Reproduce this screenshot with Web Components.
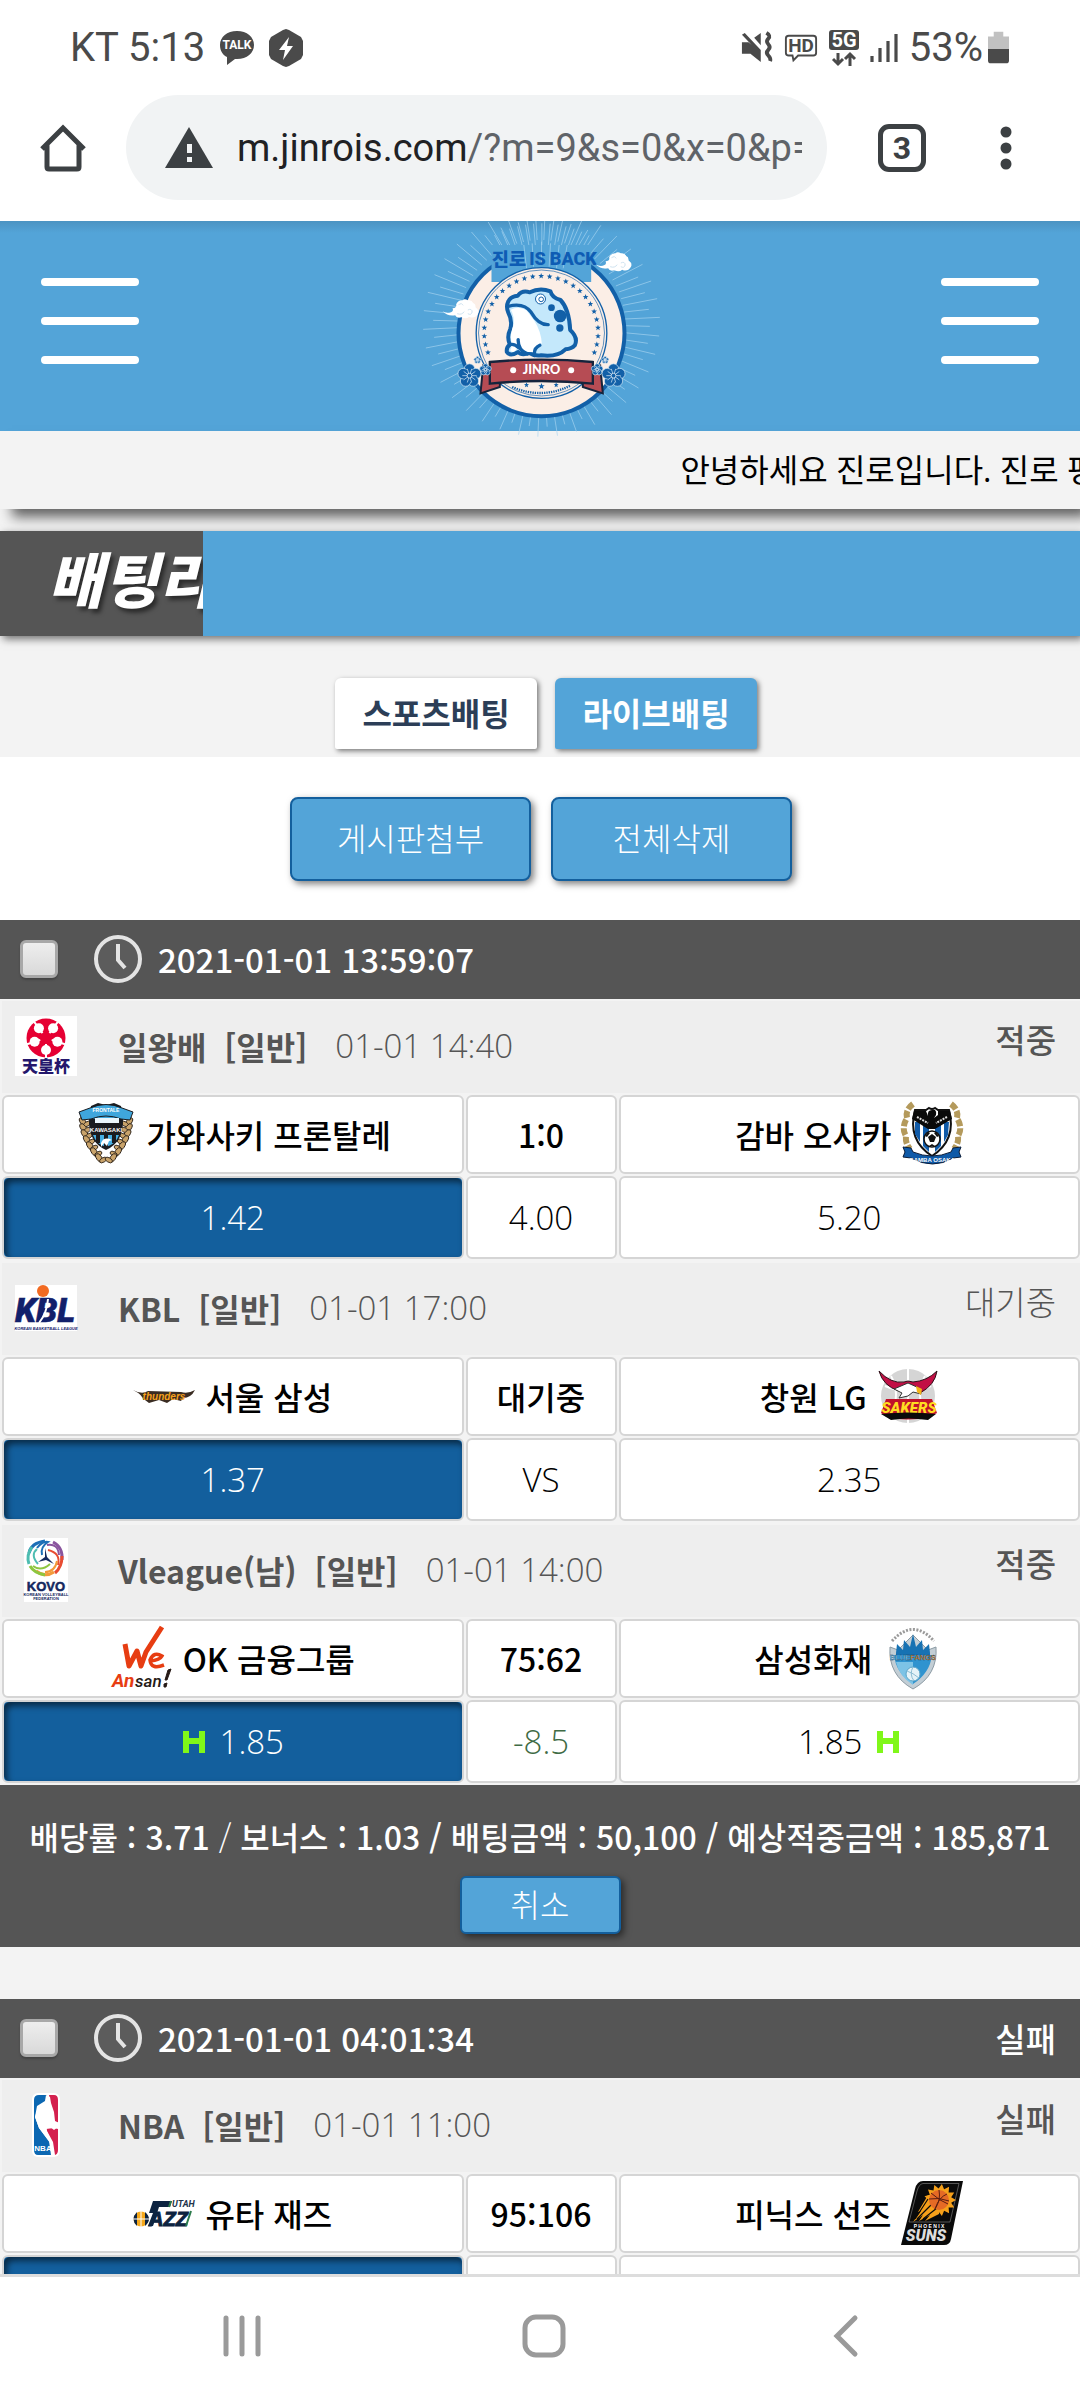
<!DOCTYPE html>
<html lang="ko">
<head>
<meta charset="utf-8">
<meta name="viewport" content="width=device-width, initial-scale=1">
<title>진로</title>
<style>
html,body{margin:0;height:100%}
body{font-family:"Open Sans","Noto Sans CJK KR",sans-serif;font-size:33px;line-height:44px;color:#000;background:#fff;
--sky:#53a4d8;--deep:#135f9d;--dark:#555;--paper:#f3f3f3;--cell:#d5d5d5;--kr:"Noto Sans CJK KR",sans-serif}
</style>
</head>
<body>
<phone-shell>
<status-bar slot="top"></status-bar>
<address-bar slot="top"></address-bar>
<site-header></site-header>
<news-ticker>안녕하세요 진로입니다. 진로 평</news-ticker>
<page-title>배팅리</page-title>
<bet-tabs></bet-tabs>
<bulk-actions></bulk-actions>
<bet-slip date="2021-01-01 13:59:07">
<bet-match logo="emperor" league="일왕배" time="01-01 14:40" result="적중" home="가와사키 프론탈레" home-logo="kawasaki" score="1:0" away="감바 오사카" away-logo="gamba" home-odds="1.42" mid-odds="4.00" away-odds="5.20"></bet-match>
<bet-match logo="kbl" league="KBL" time="01-01 17:00" result="대기중" pending home="서울 삼성" home-logo="thunders" score="대기중" away="창원 LG" away-logo="sakers" home-odds="1.37" mid-odds="VS" away-odds="2.35"></bet-match>
<bet-match logo="kovo" league="Vleague(남)" time="01-01 14:00" result="적중" home="OK 금융그룹" home-logo="ansan" score="75:62" away="삼성화재" away-logo="fangs" home-odds="1.85" mid-odds="-8.5" away-odds="1.85" handicap></bet-match>
<slip-total slot="footer"></slip-total>
</bet-slip>
<bet-slip date="2021-01-01 04:01:34" result="실패">
<bet-match logo="nba" league="NBA" time="01-01 11:00" result="실패" home="유타 재즈" home-logo="jazz" score="95:106" away="피닉스 선즈" away-logo="suns" home-odds="1.45" mid-odds="VS" away-odds="2.30"></bet-match>
</bet-slip>
<system-nav slot="bottom"></system-nav>
</phone-shell>
<script>
const star=(x,y,r,f)=>{let p='';for(let i=0;i<10;i++){const a=Math.PI*(i/5-.5),q=i%2?r*.42:r;p+=(x+q*Math.cos(a)).toFixed(1)+','+(y+q*Math.sin(a)).toFixed(1)+' '}return `<polygon points="${p}" fill="${f}"/>`};
const burst=(x,y,n,a,b,f)=>{let p='';for(let i=0;i<n*2;i++){const t=Math.PI*i/n,q=i%2?b:a;p+=(x+q*Math.cos(t)).toFixed(1)+','+(y+q*Math.sin(t)).toFixed(1)+' '}return `<polygon points="${p}" fill="${f}"/>`};
const ringStars=()=>{let s='';for(let i=0;i<27;i++){const a=(-201+i*222/26)*Math.PI/180;s+=star(482+171*Math.cos(a),352+169*Math.sin(a),9,'#1260a8')}return s};
const panels=(x,y)=>{let s='';for(let i=0;i<5;i++){const a=(i*72-54)*Math.PI/180,b=(i*72-90)*Math.PI/180;s+=`<circle cx="${(x+12*Math.cos(a)).toFixed(1)}" cy="${(y+12*Math.sin(a)).toFixed(1)}" r="5" fill="#fff"/><path d="M${(x+6*Math.cos(a)).toFixed(1)} ${(y+6*Math.sin(a)).toFixed(1)}L${(x+20*Math.cos(a)).toFixed(1)} ${(y+20*Math.sin(a)).toFixed(1)}" stroke="#fff" stroke-width="2"/><path d="M${(x+6*Math.cos(b)).toFixed(1)} ${(y+6*Math.sin(b)).toFixed(1)}L${(x+14*Math.cos(b)).toFixed(1)} ${(y+14*Math.sin(b)).toFixed(1)}" stroke="#e60033" stroke-width="2.500"/>`}return s};
const rays=()=>{let s='';for(let i=0;i<76;i++){const a=i*Math.PI/38+.03,r=i%2?340:310,c=Math.cos(a),n=Math.sin(a);s+=`M${(483+250*c).toFixed(0)} ${(325+250*n).toFixed(0)}L${(483+(r+15)*c).toFixed(0)} ${(325+r*n).toFixed(0)}`}
for(let i=0;i<13;i++){const a=(-118+i*4.7)*Math.PI/180;s+=`M${(483+170*Math.cos(a)).toFixed(0)} ${(325+170*Math.sin(a)).toFixed(0)}L${(483+300*Math.cos(a)).toFixed(0)} ${(325+300*Math.sin(a)).toFixed(0)}`}return s};
const flower=(x,y,r)=>{let s='';for(let i=0;i<5;i++){const a=(i*72-90)*Math.PI/180;s+=`<circle cx="${(x+r*.55*Math.cos(a)).toFixed(1)}" cy="${(y+r*.55*Math.sin(a)).toFixed(1)}" r="${r*.44}" fill="#1260a8" stroke="#d9edf8" stroke-width="2"/>`}s+=`<circle cx="${x}" cy="${y}" r="${r*.55}" fill="#1260a8"/>`;for(let i=0;i<10;i++){const a=i*36*Math.PI/180;s+=`<path d="M${x} ${y}L${(x+r*.6*Math.cos(a)).toFixed(1)} ${(y+r*.6*Math.sin(a)).toFixed(1)}" stroke="#e6f3fa" stroke-width="2"/>`}return s+`<circle cx="${x}" cy="${y}" r="${r*.2}" fill="#1260a8" stroke="#fff" stroke-width="2"/>`};
const cloud='<path fill="#fff" d="M0 36Q15 45 27 38Q34 34 30 27Q44 26 41 15Q47 2 60 3Q66-4 76 3Q88 1 92 11Q100 14 99 24Q112 34 106 44Q96 60 80 52Q71 61 57 54Q42 58 38 48Q16 52 0 36Z"/><path d="M48 16Q58 8 62 18M76 32Q88 26 89 38Q86 49 76 43M44 43Q58 48 65 37" fill="none" stroke="#cfe3f0" stroke-width="3"/>';
const laurel=(x,d,col)=>{let s='';for(let i=0;i<7;i++){const y=20+i*6,o=i*i*.45;s+=`<ellipse cx="${x+d*o}" cy="${y}" rx="5" ry="2.6" fill="${col}" stroke="#2b221a" stroke-width=".9" transform="rotate(${d*55} ${x+d*o} ${y})"/><ellipse cx="${x+d*(o+4)}" cy="${y+2}" rx="4" ry="2.2" fill="${col}" stroke="#2b221a" stroke-width=".8" transform="rotate(${-d*30} ${x+d*(o+4)} ${y+2})"/>`}return s};
const T='font-family="Liberation Sans,Noto Sans CJK KR,sans-serif"';
const R='font-family="Roboto,sans-serif"';
const ART={
talk:['0 0 36 36',`<path fill="#4a4a4a" d="M18 1C8 1 1 7 1 15c0 6 3 10 7 12v8l8-6h2c10 0 17-6 17-14S28 1 18 1Z"/><text x="18" y="19" ${R} font-size="12" font-weight="700" fill="#fff" text-anchor="middle">TALK</text>`],
hex:['0 0 34 38','<path fill="#4a4a4a" d="M17 0l3 1 12 7 2 4v14l-2 4-12 7-3 1-3-1-12-7-2-4V12l2-4 12-7Z"/><path fill="#fff" d="M20 8L10 21h6l-2 10 10-14h-6Z"/>'],
mute:['0 0 34 34','<path fill="#4a4a4a" d="M1 11h7l13 11v10L10 23H1ZM1 3l3-2 17 18v5ZM14 6l7-5v13Z"/><path d="M27 1q5 3 2 6t0 6 0 6 0 6 2 6" fill="none" stroke="#4a4a4a" stroke-width="4"/>'],
hd:['0 0 36 30',`<path d="M5 2h26q3 0 3 3v15q0 3-3 3H15l-5 5-1-5H5q-3 0-3-3V5q0-3 3-3Z" fill="none" stroke="#4a4a4a" stroke-width="2"/><text x="18" y="19.500" ${R} font-size="20" font-weight="700" fill="#4a4a4a" text-anchor="middle">HD</text>`],
fiveg:['0 0 30 38',`<rect x="0" y="1" width="30" height="20" rx="3" fill="#4a4a4a"/><text x="15" y="18" ${R} font-size="20" font-weight="700" fill="#fff" text-anchor="middle">5G</text><path d="M9 24v11M4 30l5 5 5-5M21 37V26M16 30l5-5 5 5" fill="none" stroke="#4a4a4a" stroke-width="3"/>`],
signal:['0 0 28 30','<path d="M2 29v-6M10 29V15M18 29V8M26 29V1" stroke="#4a4a4a" stroke-width="3.200"/>'],
battery:['0 0 22 34','<path fill="#c1c1c1" d="M6 0h10v5h6v13H0V5h6Z"/><path fill="#4a4a4a" d="M0 18h22v12q0 3-3 3H3q-3 0-3-3Z"/>'],
home:['0 0 48 48','<path d="M3 25L24 4l21 21M8 21v22q0 2 2 2h28q2 0 2-2V21" fill="none" stroke="#3c4043" stroke-width="5"/>'],
warn:['0 0 48 41','<path fill="#3c4043" d="M24 0l24 41H0Z"/><path fill="#f1f3f4" d="M22 17h5v9h-5ZM22 30h5v5h-5Z"/>'],
more:['0 0 12 44','<g fill="#3c4043"><circle cx="6" cy="6" r="5.500"/><circle cx="6" cy="22" r="5.500"/><circle cx="6" cy="38" r="5.500"/></g>'],
menu:['0 0 98 88','<path d="M4 5h90M4 44h90M4 83h90" stroke="#fff" stroke-width="8" stroke-linecap="round"/>'],
clock:['0 0 50 50','<circle cx="25" cy="25" r="22" fill="#5c5c5c" stroke="#e4e4e4" stroke-width="4"/><path d="M25 10v16l7 8" fill="none" stroke="#e4e4e4" stroke-width="4"/>'],
recents:['0 0 40 44','<path d="M4 4v36M20 4v36M36 4v36" stroke="#9a9a9a" stroke-width="5" stroke-linecap="round"/>'],
square:['0 0 44 44','<rect x="3" y="3" width="38" height="38" rx="11" fill="none" stroke="#9a9a9a" stroke-width="5"/>'],
back:['0 0 26 44','<path d="M22 4L4 22l18 18" fill="none" stroke="#9a9a9a" stroke-width="5" stroke-linecap="round"/>'],
h:['0 0 24 24','<path fill="#80f719" d="M1 1h6v7h10V1h6v22h-6v-9H7v9H1Z"/>'],
brand:['125 18 710 630',`<path d="${rays()}" stroke="#a9d6f2" stroke-width="3" opacity=".65"/>
<circle cx="483" cy="355" r="249" fill="#fbeee6" stroke="#1260a8" stroke-width="12"/>
<path fill="#53a4d8" d="M333 90h299v111H333Z"/><path d="M430 90l8 70M455 85l4 70M483 80v70M510 85l-4 70M536 90l-8 70M560 90l-12 70" stroke="#a9d6f2" stroke-width="2"/>
<circle cx="483" cy="354" r="196" fill="#fbeee6" stroke="#1260a8" stroke-width="4"/><circle cx="483" cy="354" r="189" fill="none" stroke="#1260a8" stroke-width="2"/>
${ringStars()}
<g font-weight="900" fill="#0e5cb4"><text x="334" y="154" font-family="Noto Sans CJK KR" font-size="56">진로</text><text x="446" y="151" ${R} font-size="54">IS</text><text x="508" y="151" ${R} font-size="54">BACK</text></g>
<path d="M383 260Q388 245 412 242Q425 224 448 232Q478 216 510 229Q514 248 540 255Q566 282 569 345Q594 368 583 391Q574 402 555 403Q531 427 482 421Q462 424 447 414Q423 423 413 411Q388 426 379 411Q377 397 388 389Q378 366 389 343Q397 318 383 292Q376 275 383 260Z" fill="#c4e8fb" stroke="#1260a8" stroke-width="12" stroke-linejoin="round"/>
<path d="M391 284Q414 272 438 286L462 318Q482 350 484 386Q468 384 463 412Q420 412 414 394Q399 420 389 406Q398 391 392 378Q388 358 399 330Q403 305 391 284Z" fill="#fff"/>
<path d="M383 274Q430 262 452 292Q474 330 503 329M413 374Q412 406 441 417M478 391Q459 399 462 422M388 389Q402 385 414 398" fill="none" stroke="#1260a8" stroke-width="10" stroke-linecap="round"/>
<circle cx="480" cy="252" r="15" fill="#fff" stroke="#1260a8" stroke-width="3"/><circle cx="482" cy="253" r="7" fill="none" stroke="#1260a8" stroke-width="3"/>
<circle cx="539" cy="303" r="19" fill="#1260a8"/><circle cx="513" cy="278" r="10" fill="#1260a8"/><circle cx="538" cy="339" r="11" fill="#1260a8"/>
<path d="M300 535L308 452L358 468V516ZM667 535L659 452L607 468V516Z" fill="#b64c54" stroke="#16243c" stroke-width="6"/>
<path d="M328 441Q483 427 637 441V506Q483 490 328 506Z" fill="#b64c54" stroke="#16243c" stroke-width="7"/>
<circle cx="398" cy="466" r="9" fill="#fff"/><circle cx="572" cy="466" r="9" fill="#fff"/><text x="483" y="478" font-family="Lato" font-size="38" font-weight="900" fill="#fff" text-anchor="middle">JINRO</text>
${star(438,510,8,'#1260a8')}${star(483,514,10,'#1260a8')}${star(527,510,8,'#1260a8')}
<path d="M395 516Q483 554 570 512" fill="none" stroke="#1260a8" stroke-width="7" stroke-dasharray="4 3"/>
${flower(267,482,36)}${flower(315,464,18)}${flower(291,435,11)}${flower(699,482,36)}${flower(650,464,18)}${flower(674,435,11)}
<g transform="translate(186 253)">${cloud}</g><g transform="translate(645 112)">${cloud}</g>`],
emperor:['0 0 62 60',`<path fill="#fff" d="M0 0h62v60H0Z"/><circle cx="31" cy="22" r="19.500" fill="#e60033"/>${panels(31,22)}<text x="31" y="56" font-family="Noto Sans CJK JP" font-size="16" font-weight="900" fill="#24176c" text-anchor="middle">天皇杯</text>`],
kbl:['0 0 62 46',`<path fill="#fff" d="M0 0h62v46H0Z"/><text x="30" y="37" ${R} font-size="34" font-weight="900" font-style="italic" fill="#12206b" text-anchor="middle" stroke="#12206b" stroke-width=".500">KBL</text><path d="M24 38q8-10 9-24" stroke="#fff" stroke-width="2" fill="none"/><circle cx="28" cy="6" r="6" fill="#f26a21"/><text x="31" y="45" ${T} font-size="4" font-weight="700" font-style="italic" fill="#12206b" text-anchor="middle">KOREAN BASKETBALL LEAGUE</text>`],
kovo:['0 0 44 64',`<path fill="#fff" d="M0 0h44v64H0Z"/><g fill="none" stroke-width="3"><path d="M21 3Q7 5 5 15" stroke="#1d6fb7"/><path d="M29 4Q39 9 38 22" stroke="#8a559e"/><path d="M38 18Q38 29 31 35" stroke="#e84c32"/><path d="M30 34Q21 40 12 33" stroke="#f29a3a"/><path d="M21 37Q10 35 6 28" stroke="#8dc63f"/><path d="M5 26Q2 17 8 9" stroke="#4dbdb1"/></g><g fill="none" stroke-width="2"><path d="M13 10Q18 3 24 4Q16 9 18 17" stroke="#1d6fb7"/><path d="M23 7Q34 5 35 17" stroke="#8a559e"/><path d="M24 12Q37 15 34 27" stroke="#e84c32"/><path d="M33 23Q31 34 21 34" stroke="#f29a3a"/><path d="M26 26Q17 34 9 28" stroke="#8dc63f"/><path d="M14 26Q6 17 13 11" stroke="#4dbdb1"/></g><path d="M21 10v9l-7 5 8-2 8 4-7-7Z" fill="#14285f"/><text x="22" y="53" ${T} font-size="13" font-weight="700" fill="#14285f" stroke="#14285f" stroke-width=".500" text-anchor="middle">KOVO</text><text x="22" y="58" ${T} font-size="4" font-weight="700" fill="#14285f" text-anchor="middle">KOREAN VOLLEYBALL</text><text x="22" y="62" ${T} font-size="4" font-weight="700" fill="#14285f" text-anchor="middle">FEDERATION</text>`],
nba:['0 0 28 64',`<rect width="28" height="64" rx="6" fill="#fff"/><path fill="#0b67b2" d="M7 2h8l-2 8-7 4-3 10 4 11 10 13 2 14H6q-4 0-4-5V7q0-5 5-5Z"/><path fill="#d4214f" d="M17 2h5q4 0 4 5v22l-3 1-3-12-2-9ZM26 36v21q0 5-4 5l-3-14-5-12 8-1Z"/><path fill="#fff" d="M14 2l4 2 1 6 3 9 1 9q4 1 3 6l-4 3-4-3 1-4-3-7-2 6 1 9 6 11 2 13h-2l-3-12-11-15-4-11 2-11 8-5Z"/><text x="11" y="58" ${T} font-size="8" font-weight="700" fill="#fff" text-anchor="middle">NBA</text>`],
kawasaki:['0 0 56 64',`${laurel(5,1,'#c9a36a')}${laurel(51,-1,'#c9a36a')}<path d="M13 4l7-3 8 2 8-2 7 3 2 12q1 24-17 32Q10 40 11 16Z" fill="#1a1c20"/><path d="M15 7l13-2 13 2 2 10H13Z" fill="#3fa6dc"/><path d="M15 33q3 9 13 12 10-3 13-12Z" fill="#46aee2"/><path d="M20 33v8M28 33v12M36 33v8" stroke="#1a1c20" stroke-width="4"/><path d="M1 10l11-4q16-7 32 0l11 4-3 8-9-1q-15-6-30 0l-9 1Z" fill="#3fa6dc" stroke="#1a1c20"/><path d="M17 16h24v5H17Z" fill="#eaf6fc"/><text x="28" y="10" ${T} font-size="5" font-weight="700" fill="#fff" text-anchor="middle">FRONTALE</text><text x="28" y="30" ${T} font-size="6" font-weight="700" fill="#fff" text-anchor="middle">KAWASAKI</text><path d="M23 41q3-7 11-3l-3 1-2 5-3-3-3 4Z" fill="#fff"/>`],
gamba:['0 0 60 62',`<path d="M11 1q-8 6-6 14-6 10-1 18-1 7 4 13M49 1q8 6 6 14 6 10 1 18 1 7-4 13" fill="none" stroke="#b49a5c" stroke-width="6" stroke-dasharray="7 2"/><path d="M13 7h11l3-2q3 2 6 0l3 2h11q8 30-17 46Q5 37 13 7Z" fill="#fff" stroke="#111" stroke-width="2"/><path d="M13 19h5v20l-5-8ZM21 19h6v30l-6-6ZM33 19h6v24l-6 6ZM42 19h5l-1 13-4 7Z" fill="#0f5aa8"/><path d="M12 8h12l2 5q-1-6 4-6 5-1 4 5l-2 3 4-3V8h12l2 8-17 10H26L10 16Z" fill="#0a0a0a"/><path d="M15 14l11 6M45 14l-11 6" stroke="#ddd" stroke-width="2" stroke-dasharray="2 1"/><circle cx="30" cy="36" r="8" fill="#fff" stroke="#111" stroke-width="1.500"/><path d="M30 31l4 3-2 5h-4l-2-5ZM23 33l3-4 2 1-3 4ZM37 33l-3-4-2 1 3 4ZM27 43l3-2 3 2Z" fill="#111"/><path d="M1 44l8 1 2 4q19 8 38 0l2-4 8-1-2 5 2 5-8 1q-20 12-42 0l-8-1 2-5Z" fill="#0f5aa8" stroke="#0a1c38"/><text x="30" y="58.500" ${T} font-size="6" font-weight="700" fill="#fff" text-anchor="middle">GAMBA OSAKA</text>`],
thunders:['0 0 62 14',`<path d="M0 1q9 5 15 1l33 1q7 2 14-2-4 8-12 8l-2 3-8-2-6 4-8-3-10 3-4-3H10q0-5-10-10Z" fill="#3a2c22"/><text x="31" y="11" ${T} font-size="10" font-weight="700" font-style="italic" fill="#f5a01c" text-anchor="middle">thunders</text>`],
sakers:['0 0 60 56',`<circle cx="30" cy="28" r="27" fill="#d5d5d5"/><path d="M30 1v54M7 18q23 10 46 0M13 8q10 18 0 38M47 8q-10 18 0 38" fill="none" stroke="#fff" stroke-width="2"/><path d="M1 3q12 13 25 11l4-1 5 1Q49 13 59 3q-2 14-17 22l-7-2H21Q5 18 1 3Z" fill="#c20f45" stroke="#2b1219"/><path d="M16 21l14-6 11 5 2 6-8-2-5 4-9 2 3-5Z" fill="#fff" stroke="#333"/><path d="M38 18l6 3-1 6-4-3Z" fill="#f4b517"/><path d="M3 45L8 31h46l5 14-8 4q-22 5-42 0Z" fill="#c0122b"/><text x="31" y="45" ${R} font-size="15" font-weight="900" font-style="italic" fill="#ffdd21" text-anchor="middle">SAKERS</text><path d="M3 46q27-3 55 0l-8 6q-20-3-37 0Z" fill="#0a0a0a"/>`],
ansan:['0 0 62 62',`<path d="M14 17l4 22 8-15 4 15 5-14 16-25" fill="none" stroke="#e73d12" stroke-width="5" stroke-linejoin="round"/><path d="M39 34q10-1 12-5-8-5-12 4 1 10 14 5" fill="none" stroke="#e73d12" stroke-width="3.500"/><text x="1" y="60" ${R} font-size="19" font-weight="700" font-style="italic" fill="#e73d12">An</text><text x="24" y="60" ${R} font-size="17" font-style="italic" font-weight="500" fill="#261a16">san</text><path d="M57 43l3-1-4 11h-2ZM53 57l3-1-1 4h-2Z" fill="#261a16" stroke="#261a16"/>`],
fangs:['0 0 48 64',`<path d="M3 15Q24-8 45 15" fill="none" stroke="#9a9a9a" stroke-width="3" stroke-dasharray="2 1.500"/><path d="M1 21l8 3 15-15 15 15 8-3q2 28-23 42Q-1 49 1 21Z" fill="#c3ced5" stroke="#8b9aa3"/><path d="M7 27l1-9 6 6 1-10 6 7 3-13 3 13 6-7 1 10 6-6 1 9v4H7Z" fill="#1772b3"/><path d="M5 29h38q-2 18-19 29Q7 47 5 29Z" fill="#2f93cf"/><path d="M24 36v23Q10 50 7 36Z" fill="#7cc3e6"/><circle cx="24" cy="48" r="7" fill="#e5f3f8" stroke="#5ca5c9"/><path d="M18 45q6 2 12 7M24 41q-4 7 1 14" stroke="#8dbdd3" fill="none"/><text x="24" y="34" ${T} font-size="7.500" font-weight="700" fill="#f09226" stroke="#173e62" stroke-width=".300" text-anchor="middle"><tspan fill="#8bd0f5">BLUE</tspan>FANGS</text>`],
jazz:['0 0 62 28',`<circle cx="8" cy="20" r="7.500" fill="#f5a81c"/><path d="M4 13v14Q-3 20 4 13ZM12 13v14q8-7 0-14Z" fill="#0c2340"/><path d="M0 20h16M8 12v16" stroke="#fff"/><path d="M20 2h19l-2 6H26l-6 19h-5l5-13h-4Z" fill="#0c2340"/><text x="16" y="27" ${T} font-size="20" font-weight="700" font-style="italic" fill="#0c2340" stroke="#0c2340">AZZ</text><text x="39" y="8" ${R} font-size="9" font-weight="700" font-style="italic" fill="#22334a">UTAH</text><path d="M53 27l5-15M38 2l-2 6" stroke="#2b7b4b" stroke-width="2"/>`],
suns:['0 0 62 64',`<path d="M22 0h40L50 58q-1 6-7 6H0L14 8q2-8 8-8Z" fill="#0a0a0a"/><path d="M22 2.500h36L49 41H8l8-31q2-7 6-7.500Z" fill="none" stroke="#777" stroke-width=".700"/>${burst(39,19,13,16,11.5,'#f6a01a')}<path d="M27 14L17 31l3-1-8 11 10-7-4 6 11-6-5 6 14-7 1-9Z" fill="#f6a01a"/><path d="M27 18L14 38M32 22L16 38M36 27L22 38" stroke="#0a0a0a" stroke-width="1.200"/><circle cx="38" cy="19" r="10" fill="#e56a25"/><path d="M28 18q10-2 20 2M38 9q2 10-4 19M30 12q9 8 17 11M46 13q-8 3-12 15" stroke="#5a1c10" fill="none"/><text x="28" y="47" ${T} font-size="5" font-weight="700" fill="#fff" text-anchor="middle">P H O E N I X</text><text x="25" y="60" ${R} font-size="16" font-weight="900" font-style="italic" fill="#ddd" text-anchor="middle">SUNS</text>`]
};
const define=(tag,html)=>customElements.define(tag,class extends HTMLElement{
  connectedCallback(){if(this.shadowRoot)return;this.attachShadow({mode:'open'}).innerHTML='<style>:host{display:block;box-sizing:border-box}*,*::before{box-sizing:border-box}button{font:inherit;color:inherit;border:0;background:none;padding:0;margin:0}</style>'+(typeof html==='function'?html(this):html)}
});
define('art-work',el=>{const [box,body]=ART[el.getAttribute('name')];return `<style>:host{display:block;flex:none}svg{display:block;width:100%;height:100%;overflow:visible}</style><svg viewBox="${box}" aria-hidden="true">${body}</svg>`});
const art=(name,w,h)=>`<art-work name="${name}" style="width:${w}px;height:${h}px"></art-work>`;
define('phone-shell',`<style>:host{display:flex;flex-direction:column;height:100vh}
main{flex:1;min-height:0;overflow:hidden;background:var(--paper)}</style><slot name="top"></slot><main><slot></slot></main><slot name="bottom"></slot>`);
define('status-bar',`<style>:host{display:flex;justify-content:space-between;align-items:center;height:95px;padding:0 71px 0 70px;font-family:Roboto,sans-serif;font-size:40px;line-height:48px;color:#4a4a4a}
div{display:flex;align-items:center}.l{gap:14px}.r{gap:11px}.b{display:flex;align-items:center;gap:5px}</style>
<div class="l"><span>KT 5:13</span>${art('talk',36,36)}${art('hex',34,38)}</div>
<div class="r">${art('mute',32,34)}${art('hd',34,30)}${art('fiveg',30,38)}${art('signal',28,30)}<span class="b">53%${art('battery',21,34)}</span></div>`);
define('address-bar',`<style>:host{display:flex;align-items:center;height:126px;padding:0 68px 21px 39px;font-family:Roboto,sans-serif}
.pill{flex:1;min-width:0;height:105px;border-radius:53px;background:#f1f3f4;margin:0 51px 0 39px;padding:0 25px 0 39px;display:flex;align-items:center;gap:24px}
.url{flex:1;min-width:0;overflow:hidden;white-space:nowrap;font-size:38px;line-height:48px;color:#5f6368}.url b{font-weight:400;color:#202124}
.tabs{width:48px;height:48px;border:5px solid #3c4043;border-radius:11px;font-size:32px;line-height:38px;font-weight:700;color:#3c4043;margin-right:74px;text-align:center}</style>
<button aria-label="홈">${art('home',48,48)}</button><div class="pill">${art('warn',48,41)}<div class="url"><b>m.jinrois.com</b>/?m=9&amp;s=0&amp;x=0&amp;p=</div></div><button class="tabs">3</button><button aria-label="더보기">${art('more',12,44)}</button>`);
define('site-header',`<style>:host{display:flex;justify-content:space-between;align-items:center;height:210px;padding:0 41px;background:linear-gradient(#4b93c2,#53a4d8 12px)}button{padding-bottom:10px}</style>
<button aria-label="메뉴">${art('menu',98,88)}</button>${art('brand',237,210)}<button aria-label="내 메뉴">${art('menu',98,88)}</button>`);
define('news-ticker',`<style>:host{height:78px;padding:17px 0 0 63%;background:var(--paper);box-shadow:10px 10px 12px -2px rgba(0,0,0,.6);white-space:nowrap;font-size:32px;font-weight:400}</style><slot></slot>`);
define('page-title',`<style>:host{margin-top:22px;height:105px;background:var(--sky);box-shadow:3px 3px 8px rgba(0,0,0,.55);position:relative}
h1{margin:0;width:203px;height:105px;padding-left:48px;background:var(--dark);color:#fff;overflow:hidden;white-space:nowrap;font:italic 900 60px/92px var(--kr);text-shadow:3px 4px 4px rgba(0,0,0,.5)}</style><h1><slot></slot></h1>`);
define('bet-tabs',`<style>:host{display:flex;justify-content:center;gap:18px;padding:42px 0 8px 12px}
button{width:202px;height:71px;border-radius:6px 6px 2px 2px;background:#fff;color:#2c3e57;font-size:32px;font-weight:600;box-shadow:2px 2px 5px rgba(0,0,0,.5)}button+button{background:var(--sky);color:#fff}</style><button>스포츠배팅</button><button>라이브배팅</button>`);
define('bulk-actions',`<style>:host{display:flex;justify-content:center;gap:20px;padding:40px 0 39px 2px;background:#fff}
button{width:241px;height:84px;border:2px solid var(--deep);border-radius:8px;background:var(--sky);color:#fff;font-size:32px;font-weight:300;box-shadow:3px 3px 7px rgba(0,0,0,.5)}</style><button>게시판첨부</button><button>전체삭제</button>`);
define('bet-slip',el=>`<style>:host{display:block;margin-bottom:52px}
header{display:flex;align-items:center;height:79px;padding:0 24px 2px 20px;background:var(--dark);color:#fff;font-family:var(--kr);font-weight:500}
label{display:flex;align-items:center;gap:15px;flex:1}
input{appearance:none;width:38px;height:38px;margin:0 20px 0 0;border:3px solid #a8a8a8;border-radius:6px;background:linear-gradient(#eee,#d9d9d9);box-shadow:0 2px 2px #444}
.body{display:flex;flex-direction:column;gap:2px;padding:2px 0 0 1px}</style>
<header><label><input type="checkbox">${art('clock',50,50)}<time>${el.getAttribute('date')}</time></label><span>${el.getAttribute('result')||''}</span></header>
<div class="body"><slot></slot></div><slot name="footer"></slot>`);
define('bet-match',el=>{const g=n=>el.getAttribute(n)||'',hc=el.hasAttribute('handicap'),H=hc?art('h',24,24):'';
const size={emperor:[62,60],kbl:[62,46],kovo:[44,64],nba:[28,64],kawasaki:[56,64],gamba:[60,62],thunders:[62,14],sakers:[60,56],ansan:[62,62],fangs:[48,64],jazz:[62,28],suns:[62,64]};
const logo=n=>`<span class="logo">${art(n,...size[n])}</span>`;
return `<style>:host{display:block;overflow:hidden}
.league{display:flex;align-items:center;height:92px;padding:0 24px 2px 13px;background:#eee;color:#555;margin-left:1px}
.logo{display:inline-flex;width:62px;height:64px;align-items:center;justify-content:center;flex:none}
strong{margin-left:41px;white-space:pre;font-family:var(--kr);font-size:32px}time{margin-left:28px;font-weight:300;flex:1}
.res{font-weight:500;padding-bottom:10px}:host([pending]) .res{font-weight:300}
table{table-layout:fixed;border-collapse:separate;border-spacing:2px;margin-left:-1px;width:calc(100% + 3px)}
col.mid{width:151px}
th,td{border:2px solid var(--cell);border-radius:6px;background:#fff;padding:0;text-align:center}
th{height:79px;padding-bottom:2px;font-weight:500;font-family:var(--kr);font-size:32px}td{height:83px;font-weight:300}
.in{display:flex;align-items:center;justify-content:center;gap:10px;white-space:nowrap}
td.pick{background:var(--deep);color:#fff;box-shadow:inset 3px 4px 6px rgba(0,0,0,.55)}.hc .in{gap:14px}.hc .mid{color:#3f6b45}</style>
<div class="league">${logo(g('logo'))}<strong>${g('league')}  [일반]</strong><time>${g('time')}</time><span class="res">${g('result')}</span></div>
<table><colgroup><col><col class="mid"><col></colgroup>
<tr><th><div class="in">${logo(g('home-logo'))}<span>${g('home')}</span></div></th><th>${g('score')}</th><th><div class="in"><span>${g('away')}</span>${logo(g('away-logo'))}</div></th></tr>
<tr class="${hc?'hc':''}"><td class="pick"><div class="in">${H}<span>${g('home-odds')}</span></div></td><td class="mid">${g('mid-odds')}</td><td><div class="in"><span>${g('away-odds')}</span>${H}</div></td></tr></table>`});
define('slip-total',`<style>:host{display:flex;flex-direction:column;align-items:center;gap:18px;height:162px;padding-top:29px;background:var(--dark);color:#fff}
p{margin:0;white-space:nowrap;font-weight:500;font-family:var(--kr);font-size:32px}i{font-style:normal;font-weight:300}
button{width:161px;height:58px;border:2px solid var(--deep);border-radius:6px;background:var(--sky);font-size:32px;font-weight:300;box-shadow:3px 3px 7px rgba(0,0,0,.5)}</style>
<p>배당률 : 3.71 <i>/</i> 보너스 : 1.03 / 배팅금액 : 50,100 / 예상적중금액 : 185,871</p><button>취소</button>`);
define('system-nav',`<style>:host{display:flex;height:126px;border-top:3px solid #ddd;background:#fff;padding:0 83px 5px 91px}
button{flex:1;display:flex;align-items:center;justify-content:center}</style><button aria-label="최근 앱">${art('recents',40,44)}</button><button aria-label="홈">${art('square',44,44)}</button><button aria-label="뒤로">${art('back',26,44)}</button>`);
</script>
</body>
</html>
